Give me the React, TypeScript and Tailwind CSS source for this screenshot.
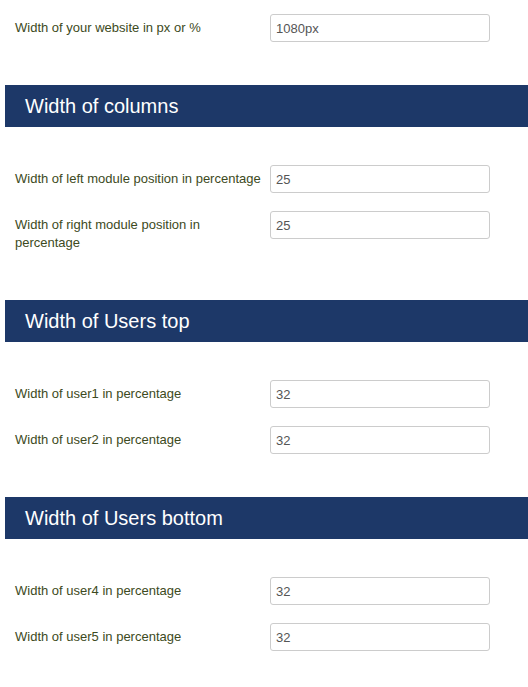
const SECTIONS = [
  {
    title: "Width of columns",
    rows: [
      { label: "Width of left module position in percentage", value: "25" },
      { label: "Width of right module position in percentage", value: "25" },
    ],
  },
  {
    title: "Width of Users top",
    rows: [
      { label: "Width of user1 in percentage", value: "32" },
      { label: "Width of user2 in percentage", value: "32" },
    ],
  },
  {
    title: "Width of Users bottom",
    rows: [
      { label: "Width of user4 in percentage", value: "32" },
      { label: "Width of user5 in percentage", value: "32" },
    ],
  },
];

function Field({ label, value }: { label: string; value: string }) {
  return (
    <div className="flex items-start">
      <label className="w-[270px] shrink-0 pl-[15px] pt-[5px] pb-[5px] pr-[2px] text-[13px] leading-[18px] text-[#3d4a22]">
        {label}
      </label>
      <input
        readOnly
        value={value}
        className="h-[28px] w-[220px] rounded-[3px] border border-[#cccccc] bg-white px-[5px] text-[13px] text-[#555555] outline-none"
      />
    </div>
  );
}

export default function App() {
  return (
    <div
      className="min-h-[687px] w-[528px] bg-white"
      style={{ fontFamily: '"Liberation Sans", Arial, sans-serif' }}
    >
      <div className="pt-[14px]">
        <Field label="Width of your website in px or %" value="1080px" />
      </div>
      {SECTIONS.map((s) => (
        <div key={s.title} className="mt-[43px]">
          <div className="ml-[5px] flex h-[42px] items-center bg-[#1d3868] pl-[20px] text-[20px] text-white">
            {s.title}
          </div>
          <div className="mt-[38px] flex flex-col gap-[18px]">
            {s.rows.map((r) => (
              <Field key={r.label} label={r.label} value={r.value} />
            ))}
          </div>
        </div>
      ))}
    </div>
  );
}
